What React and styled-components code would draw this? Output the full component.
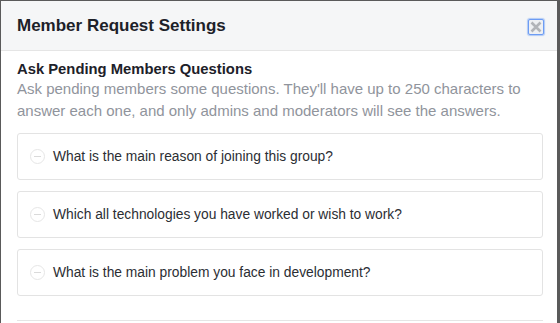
import styled, { createGlobalStyle } from "styled-components";

const GlobalStyle = createGlobalStyle`
  html, body {
    margin: 0;
    padding: 0;
    background: #5a5a5a;
    font-family: "Liberation Sans", Arial, sans-serif;
  }
`;

const Modal = styled.div`
  width: 556px;
  height: 322px;
  margin: 1px 0 0 1px;
  background: #fff;
  overflow: hidden;
  display: flex;
  flex-direction: column;
`;

const Header = styled.div`
  height: 49px;
  flex-shrink: 0;
  background: #f5f6f7;
  border-bottom: 1px solid #e5e5e5;
  display: flex;
  align-items: center;
  justify-content: space-between;
  padding: 0 13px 0 16px;
`;

const Title = styled.h2`
  margin: 0;
  font-size: 17px;
  font-weight: bold;
  color: #1d2129;
`;

const CloseButton = styled.button`
  width: 16px;
  height: 16px;
  margin-top: 2px;
  padding: 0;
  border: 1px solid #6d9cf4;
  border-radius: 2px;
  background: #eef0f3;
  display: flex;
  align-items: center;
  justify-content: center;
  box-shadow: 0 0 1px 1px rgba(91, 147, 242, 0.45);
`;

const Body = styled.div`
  padding: 9px 14px 0 16px;
  display: flex;
  flex-direction: column;
`;

const SectionTitle = styled.div`
  font-size: 14.8px;
  font-weight: bold;
  color: #1d2129;
  line-height: 18px;
`;

const Description = styled.p`
  margin: 0 0 11px;
  font-size: 15px;
  line-height: 22px;
  color: #90949c;
`;

const QuestionList = styled.div`
  display: flex;
  flex-direction: column;
  gap: 11px;
`;

const Question = styled.div`
  height: 45px;
  border: 1px solid #e3e3e3;
  border-radius: 3px;
  display: flex;
  align-items: center;
  padding: 0 12px;
  gap: 8px;
  font-size: 13.8px;
  color: #2b2e33;
`;

const RemoveIcon = styled.span`
  width: 13px;
  height: 13px;
  border: 1px solid #e6e6e6;
  border-radius: 50%;
  position: relative;
  flex-shrink: 0;

  &::after {
    content: "";
    position: absolute;
    left: 3px;
    right: 3px;
    top: 6px;
    height: 1px;
    background: #dadada;
  }
`;

const Divider = styled.div`
  margin-top: 24px;
  height: 1px;
  background: #e5e5e5;
`;

const questions = [
  "What is the main reason of joining this group?",
  "Which all technologies you have worked or wish to work?",
  "What is the main problem you face in development?",
];

const App = () => (
  <>
    <GlobalStyle />
    <Modal>
      <Header>
        <Title>Member Request Settings</Title>
        <CloseButton aria-label="Close">
          <svg width="14" height="14" viewBox="0 0 14 14">
            <path d="M2.5 2.5 L11.5 11.5 M11.5 2.5 L2.5 11.5" stroke="#b1b4b9" strokeWidth="2.6" />
          </svg>
        </CloseButton>
      </Header>
      <Body>
        <SectionTitle>Ask Pending Members Questions</SectionTitle>
        <Description>
          Ask pending members some questions. They'll have up to 250 characters to answer each one,
          and only admins and moderators will see the answers.
        </Description>
        <QuestionList>
          {questions.map((q) => (
            <Question key={q}>
              <RemoveIcon />
              {q}
            </Question>
          ))}
        </QuestionList>
        <Divider />
      </Body>
    </Modal>
  </>
);

export default App;
